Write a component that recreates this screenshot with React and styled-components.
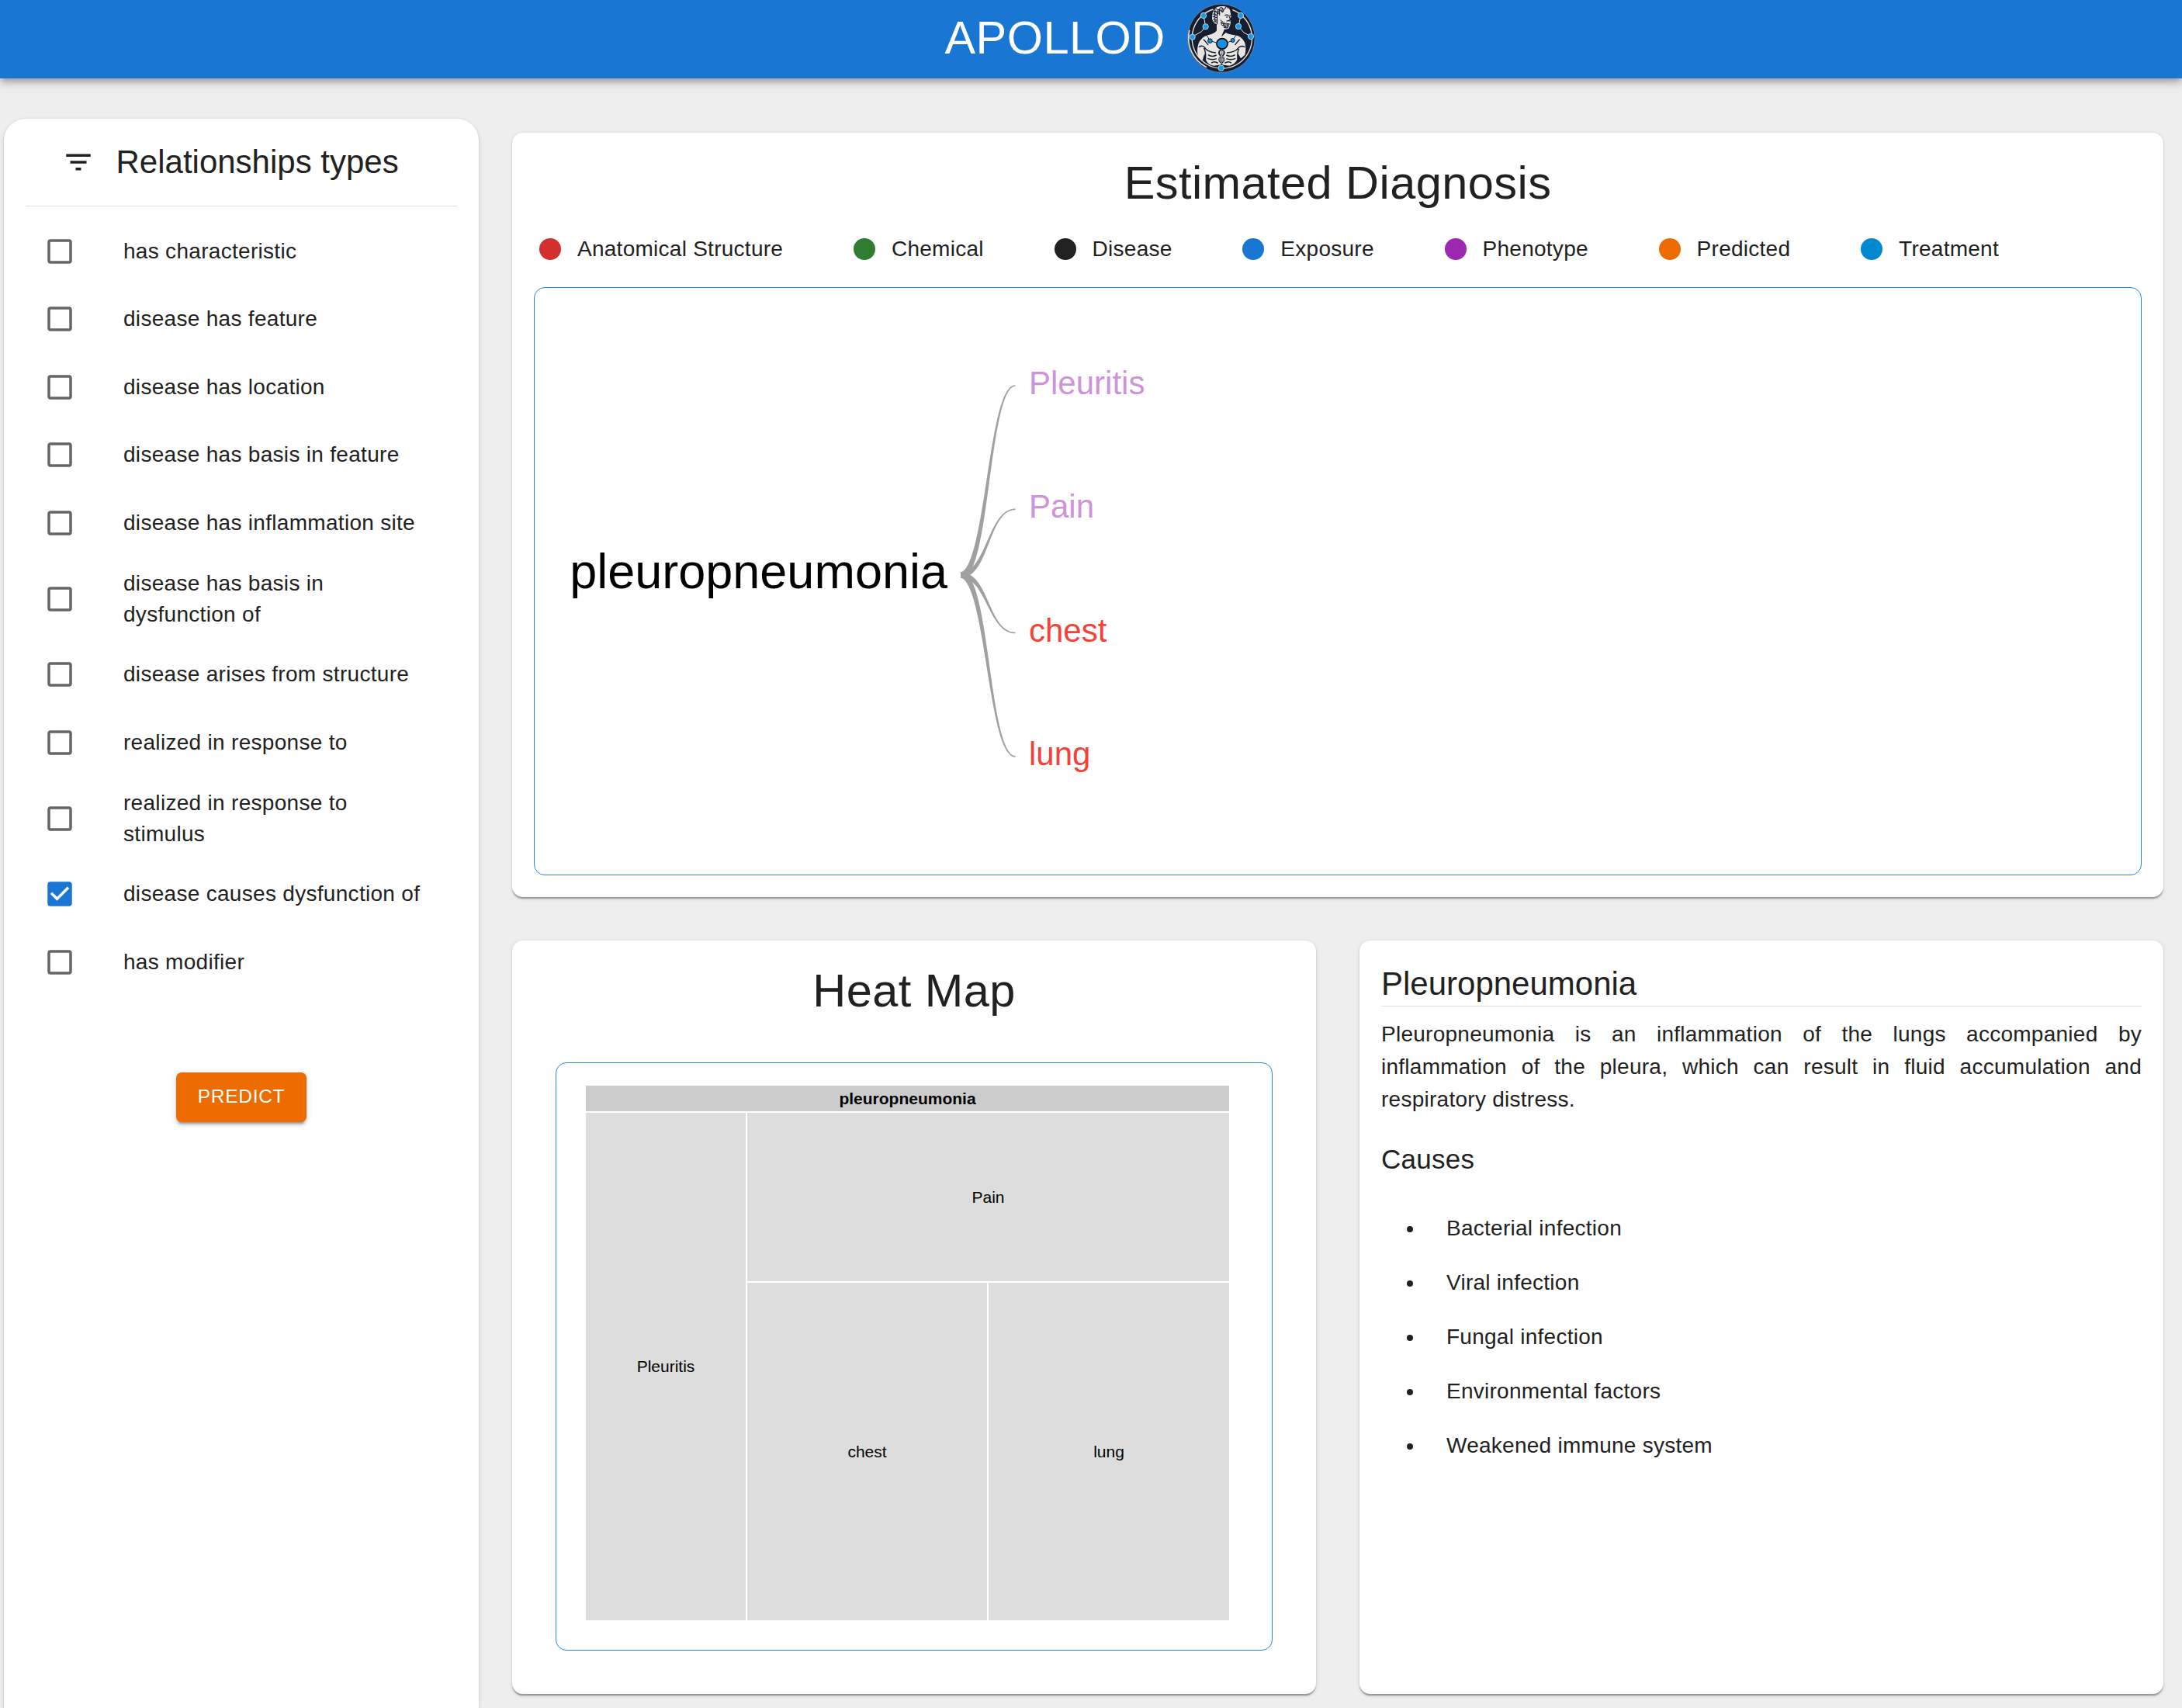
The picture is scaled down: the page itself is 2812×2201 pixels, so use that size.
import React from 'react';
import styled, { createGlobalStyle } from 'styled-components';

const GlobalStyle = createGlobalStyle`
  *, *::before, *::after { box-sizing: border-box; }
  html, body { margin: 0; padding: 0; background: #eeeeee; }
  body {
    font-family: "Liberation Sans", Arial, sans-serif;
    color: #212121;
    overflow: hidden;
  }
`;

const Page = styled.div`
  display: flex;
  flex-direction: column;
  height: 2201px;
  overflow: hidden;
  background: #eeeeee;
`;

const TopBar = styled.header`
  display: flex;
  flex: none;
  justify-content: center;
  align-items: flex-start;
  gap: 28px;
  height: 101px;
  padding: 5px 0 0 23px;
  color: #fff;
  background: #1976d2;
  box-shadow: 0 3.5px 7px -1.75px rgba(0, 0, 0, 0.2), 0 7px 8.75px 0 rgba(0, 0, 0, 0.14),
    0 1.75px 17.5px 0 rgba(0, 0, 0, 0.12);
  z-index: 1;
`;

const Brand = styled.h1`
  margin: 7px 0 0;
  font-size: 59.5px;
  font-weight: 400;
  line-height: 73.5px;
  letter-spacing: 0.00735em;
`;

const LogoSvg = styled.svg`
  display: block;
  width: 88px;
  height: 89px;
`;

const Content = styled.div`
  display: flex;
  flex: 1;
  min-height: 0;
  gap: 43px;
  padding: 0 24px 0 5px;
`;

const Sidebar = styled.aside`
  flex: none;
  width: 612px;
  margin-top: 52px;
  background: #fff;
  border-radius: 28px 28px 0 0;
  box-shadow: 0 3.5px 1.75px -1.75px rgba(0, 0, 0, 0.2), 0 1.75px 1.75px 0 rgba(0, 0, 0, 0.14),
    0 1.75px 5.25px 0 rgba(0, 0, 0, 0.12);
`;

const SidebarHead = styled.div`
  display: flex;
  align-items: center;
  gap: 27.5px;
  height: 112px;
  margin: 0 28px;
  padding-left: 47px;
`;

const SidebarTitle = styled.h2`
  margin: 0;
  font-size: 42px;
  font-weight: 400;
  line-height: 56px;
`;

const Divider = styled.hr`
  height: 1px;
  margin: ${(p) => p.$inset || 0};
  border: 0;
  background: #e0e0e0;
`;

const Icon = styled.svg`
  flex: none;
  display: block;
  width: 42px;
  height: 42px;
  fill: ${(p) => p.$color || 'currentColor'};
`;

const FilterList = styled.ul`
  margin: 14px 0 0;
  padding: 0 0 0 51px;
  list-style: none;
`;

const FilterRow = styled.li`
  display: flex;
  align-items: center;
  gap: 61px;
  min-height: 87.5px;
  padding: 14px 0;
`;

const FilterLabel = styled.span`
  width: 395px;
  font-size: 28px;
  line-height: 40px;
  letter-spacing: 0.01071em;
`;

const PredictButton = styled.button`
  display: block;
  width: 168px;
  height: 64px;
  margin: 98px auto 0;
  padding: 0 0 3px;
  border: 0;
  border-radius: 7px;
  color: #fff;
  background: #ed6c02;
  font-family: inherit;
  font-size: 24.5px;
  line-height: 43px;
  letter-spacing: 0.02857em;
  box-shadow: 0 5.25px 1.75px -3.5px rgba(0, 0, 0, 0.2), 0 3.5px 3.5px 0 rgba(0, 0, 0, 0.14),
    0 1.75px 8.75px 0 rgba(0, 0, 0, 0.12);
`;

const Main = styled.main`
  display: flex;
  flex: 1;
  flex-direction: column;
  gap: 56px;
  min-width: 0;
  padding-top: 70px;
`;

const Card = styled.section`
  display: flex;
  flex: ${(p) => p.$flex || 'none'};
  flex-direction: column;
  min-width: 0;
  height: ${(p) => p.$height}px;
  padding: 28px;
  background: #fff;
  border-radius: 14px;
  box-shadow: 0 3.5px 1.75px -1.75px rgba(0, 0, 0, 0.2), 0 1.75px 1.75px 0 rgba(0, 0, 0, 0.14),
    0 1.75px 5.25px 0 rgba(0, 0, 0, 0.12);
`;

const CardRow = styled.div`
  display: flex;
  gap: 56px;
`;

const CardTitle = styled.h2`
  margin: 0;
  font-size: 59.5px;
  font-weight: 400;
  line-height: 73px;
  letter-spacing: 0.00735em;
  text-align: center;
`;

const Legend = styled.ul`
  display: flex;
  gap: 83.8px;
  margin: 28px 0;
  padding: 0;
  list-style: none;
`;

const LegendItem = styled.li`
  display: flex;
  align-items: center;
  gap: 14px;
  font-size: 28px;
  line-height: 42px;
  letter-spacing: 0.00938em;
  white-space: nowrap;
`;

const Dot = styled.span`
  flex: none;
  width: 28px;
  height: 28px;
  margin: 7px;
  border-radius: 50%;
  background: ${(p) => p.$color};
`;

const Frame = styled.div`
  height: 758px;
  margin: ${(p) => p.$margin || 0};
  padding: ${(p) => p.$padding || 0};
  border: 1px solid #2088ee;
  border-radius: 14px;
`;

const TreeSvg = styled.svg`
  display: block;
  width: 2070px;
  height: 756px;
  font-size: 42px;
`;

const HeatTable = styled.div`
  display: flex;
  flex-direction: column;
  gap: 2px;
  width: 829px;
  height: 689px;
  color: #000;
  font-size: 21px;
  line-height: 24px;
`;

const HeatHead = styled.div`
  flex: none;
  height: 33px;
  background: #cccccc;
  font-weight: 700;
  line-height: 33px;
  text-align: center;
`;

const HeatGrid = styled.div`
  display: grid;
  flex: 1;
  grid-template-columns: 206px 309px 310px;
  grid-template-rows: 217px 1fr;
  gap: 2px;
`;

const HeatCell = styled.div`
  display: flex;
  align-items: center;
  justify-content: center;
  grid-column: span ${(p) => p.$cols || 1};
  grid-row: span ${(p) => p.$rows || 1};
  background: #dddddd;
`;

const InfoTitle = styled.h3`
  margin: 0;
  font-size: 42px;
  font-weight: 400;
  line-height: 56px;
`;

const Summary = styled.p`
  margin: 15px 0 28px;
  font-size: 28px;
  line-height: 42px;
  letter-spacing: 0.00938em;
  text-align: justify;
`;

const InfoSubtitle = styled.h4`
  margin: 0;
  font-size: 35px;
  font-weight: 400;
  line-height: 56px;
  letter-spacing: 0.0075em;
`;

const CauseList = styled.ul`
  margin: 26px 0 0;
  padding: 0 0 0 33px;
  list-style: none;
`;

const CauseItem = styled.li`
  display: flex;
  align-items: center;
  gap: 43px;
  padding: 14px 0;
  font-size: 28px;
  line-height: 42px;
  letter-spacing: 0.00938em;

  &::before {
    content: '';
    width: 8px;
    height: 8px;
    margin-top: 1px;
    border-radius: 50%;
    background: #212121;
  }
`;

const FILTERS = [
  { label: 'has characteristic' },
  { label: 'disease has feature' },
  { label: 'disease has location' },
  { label: 'disease has basis in feature' },
  { label: 'disease has inflammation site' },
  { label: 'disease has basis in dysfunction of' },
  { label: 'disease arises from structure' },
  { label: 'realized in response to' },
  { label: 'realized in response to stimulus' },
  { label: 'disease causes dysfunction of', checked: true },
  { label: 'has modifier' },
];

const LEGEND = [
  ['Anatomical Structure', '#d32f2f'],
  ['Chemical', '#2e7d32'],
  ['Disease', '#212121'],
  ['Exposure', '#1976d2'],
  ['Phenotype', '#9c27b0'],
  ['Predicted', '#ed6c02'],
  ['Treatment', '#0288d1'],
];

const PHENOTYPE = '#ce93d8';
const ANATOMY = '#f44336';

const CHILDREN = [
  { name: 'Pleuritis', color: PHENOTYPE, y: 126, base: 137, taper: 1.5 },
  { name: 'Pain', color: PHENOTYPE, y: 285.3, base: 296, taper: 2.1 },
  { name: 'chest', color: ANATOMY, y: 444.5, base: 456, taper: 2.1 },
  { name: 'lung', color: ANATOMY, y: 603.9, base: 615, taper: 1.5 },
];

const CAUSES = [
  'Bacterial infection',
  'Viral infection',
  'Fungal infection',
  'Environmental factors',
  'Weakened immune system',
];

// Outline of an S-curve whose width shrinks from the root to the leaf.
function taperedLink(x0, y0, x1, y1, taper) {
  const steps = 48;
  const upper = [];
  const lower = [];
  for (let i = 0; i <= steps; i += 1) {
    const t = i / steps;
    const u = 1 - t;
    const mid = (x0 + x1) / 2;
    const x = u * u * u * x0 + 3 * u * t * mid + t * t * t * x1;
    const y = y0 * (u * u * u + 3 * u * u * t) + y1 * (3 * u * t * t + t * t * t);
    const dx = 3 * u * u * (mid - x0) + 3 * t * t * (x1 - mid);
    const dy = 6 * u * t * (y1 - y0);
    const len = Math.hypot(dx, dy) || 1;
    const half = (1.6 + 6.2 * u ** taper) / 2;
    upper.push(`${(x - (dy / len) * half).toFixed(2)},${(y + (dx / len) * half).toFixed(2)}`);
    lower.unshift(`${(x + (dy / len) * half).toFixed(2)},${(y - (dx / len) * half).toFixed(2)}`);
  }
  return `M${upper.concat(lower).join('L')}Z`;
}

function Logo() {
  const ink = '#141e2e';
  const skin = '#e9e5e2';
  const node = '#1590e0';
  return (
    <LogoSvg viewBox="43 17 264 267">
      <ellipse cx="174.5" cy="150" rx="130" ry="132" fill={ink} />
      <ellipse cx="174.5" cy="150" rx="130" ry="132" fill="none" stroke="#8d97a3" strokeWidth="2" />
      <path d="M52 118A125 126 0 0 0 118 262" fill="none" stroke="#dcdcdc" strokeWidth="5" />
      <path d="M143 38A116 117 0 1 0 218 40" fill="none" stroke={skin} strokeWidth="4" />
      <path
        d="M106 62L114 104L98 124L62 145M250 62L241 104L262 128L290 144"
        fill="none"
        stroke={skin}
        strokeWidth="3"
      />
      {/* shoulders and torso */}
      <path
        d="M157 92L157 120Q150 132 122 138Q96 146 86 172Q78 198 86 222L102 236L110 208L116 236Q126 254 146 256L174 252L206 256Q228 250 236 232L240 208L250 228L266 214Q272 190 266 168Q256 142 226 138Q196 134 190 126L175 144L190 112Z"
        fill={skin}
      />
      <path d="M176 143L168 116L182 120Z" fill={skin} />
      <path d="M188 112L175 144L190 130L198 120Z" fill={ink} />
      {/* head, hair and beard */}
      <path
        d="M148 36Q160 25 182 26Q206 26 209 44L213 68L209 72L211 92L204 112L190 116L172 104L160 96L148 92L139 76Q139 50 148 36Z"
        fill={skin}
      />
      <path
        d="M147 38q6 -6 11 0t11 -3t11 0t11 -3t10 3M144 48q6 -6 11 0t10 -3t10 0t9 -4M143 58q5 -5 9 0t9 -2t8 0M142 68q5 -5 9 0t9 -2M143 78q5 -5 9 0t9 -2M148 88q5 -5 9 0M150 38v50M159 42v54M168 38v24M178 34v12"
        fill="none"
        stroke={ink}
        strokeWidth="3.4"
      />
      <path
        d="M172 78q5 6 3 12t6 12M179 84q4 6 3 10t6 14M187 88q3 6 2 10t5 13M195 90q3 5 2 8t3 10M203 92q-2 8 0 12M172 90q12 6 36 5M177 99q12 6 28 4M184 108q8 3 18 1"
        fill="none"
        stroke={ink}
        strokeWidth="3"
      />
      <path
        d="M188 62Q196 57 202 62L212 63M193 68h9M206 66l4 12l-6 3M195 84q8 -4 14 0"
        fill="none"
        stroke={ink}
        strokeWidth="3.6"
      />
      {/* muscles */}
      <path
        d="M88 184Q100 176 109 184Q120 204 154 206M266 184Q252 176 242 186Q228 204 196 206M108 188Q118 210 112 240M242 190Q234 214 240 236M124 214Q138 224 156 215M228 214Q212 224 194 215M122 228Q140 236 156 229M230 228Q212 236 194 229M136 246Q148 236 162 246M214 246Q202 236 188 246M106 154Q118 166 124 176M246 154Q234 166 228 176"
        fill="none"
        stroke={ink}
        strokeWidth="4.2"
      />
      {/* chest emblem with the staff below */}
      <path d="M116 134L131 160L156 167M232 138L218 158L200 166" fill="none" stroke={ink} strokeWidth="3" />
      <circle cx="131" cy="160" r="8.5" fill={node} stroke={ink} strokeWidth="3" />
      <circle cx="219" cy="158" r="7.5" fill={node} stroke={ink} strokeWidth="3" />
      <ellipse cx="178" cy="171" rx="21.5" ry="20" fill={node} stroke="#070c14" strokeWidth="5" />
      <path d="M176 192V256" stroke={ink} strokeWidth="6" />
      <ellipse cx="176" cy="206" rx="10" ry="11" fill="none" stroke={ink} strokeWidth="6" />
      <ellipse cx="176" cy="232" rx="9" ry="11" fill="none" stroke={ink} strokeWidth="6" />
      <path
        d="M168 198q20 10 8 20q-14 10 -4 24M184 198q-20 10 -8 20q14 10 4 24M176 194V248"
        fill="none"
        stroke={skin}
        strokeWidth="2"
      />
      {[
        [106, 62],
        [114, 105],
        [63, 145],
        [250, 62],
        [241, 104],
        [289, 143],
        [174, 265],
      ].map(([cx, cy]) => (
        <circle key={`${cx}-${cy}`} cx={cx} cy={cy} r="11" fill="#189be8" stroke="#d5e6ee" strokeWidth="2.4" />
      ))}
    </LogoSvg>
  );
}

function Checkbox({ checked }) {
  if (checked) {
    return (
      <Icon viewBox="0 0 24 24" $color="#1976d2">
        <path d="M19 3H5c-1.11 0-2 .9-2 2v14c0 1.1.89 2 2 2h14c1.11 0 2-.9 2-2V5c0-1.1-.89-2-2-2zm-9 14l-5-5 1.41-1.41L10 14.17l7.59-7.59L19 8l-9 9z" />
      </Icon>
    );
  }
  return (
    <Icon viewBox="0 0 24 24" $color="#666666">
      <path d="M19 5v14H5V5h14m0-2H5c-1.1 0-2 .9-2 2v14c0 1.1.9 2 2 2h14c1.1 0 2-.9 2-2V5c0-1.1-.9-2-2-2z" />
    </Icon>
  );
}

function DiagnosisTree() {
  return (
    <TreeSvg viewBox="0 0 2070 756">
      <g fill="#a0a0a0">
        {CHILDREN.map((c) => (
          <path key={c.name} d={taperedLink(549, 370, 619.5, c.y, c.taper)} />
        ))}
      </g>
      <text x="532" y="387" fontSize="63" textAnchor="end" fill="#000">
        pleuropneumonia
      </text>
      {CHILDREN.map((c) => (
        <text key={c.name} x="637" y={c.base} fill={c.color}>
          {c.name}
        </text>
      ))}
    </TreeSvg>
  );
}

export default function App() {
  return (
    <Page>
      <GlobalStyle />
      <TopBar>
        <Brand>APOLLOD</Brand>
        <Logo />
      </TopBar>
      <Content>
        <Sidebar>
          <SidebarHead>
            <Icon viewBox="0 0 24 24">
              <path d="M10 18h4v-2h-4v2zM3 6v2h18V6H3zm3 7h12v-2H6v2z" />
            </Icon>
            <SidebarTitle>Relationships types</SidebarTitle>
          </SidebarHead>
          <Divider $inset="0 28px" />
          <FilterList>
            {FILTERS.map((f) => (
              <FilterRow key={f.label}>
                <Checkbox checked={f.checked} />
                <FilterLabel>{f.label}</FilterLabel>
              </FilterRow>
            ))}
          </FilterList>
          <PredictButton>PREDICT</PredictButton>
        </Sidebar>
        <Main>
          <Card $height={985}>
            <CardTitle>Estimated Diagnosis</CardTitle>
            <Legend>
              {LEGEND.map(([label, color]) => (
                <LegendItem key={label}>
                  <Dot $color={color} />
                  {label}
                </LegendItem>
              ))}
            </Legend>
            <Frame>
              <DiagnosisTree />
            </Frame>
          </Card>
          <CardRow>
            <Card $height={971} $flex="1">
              <CardTitle>Heat Map</CardTitle>
              <Frame $margin="56px 28px 0" $padding="29px 0 0 38px">
                <HeatTable>
                  <HeatHead>pleuropneumonia</HeatHead>
                  <HeatGrid>
                    <HeatCell $rows={2}>Pleuritis</HeatCell>
                    <HeatCell $cols={2}>Pain</HeatCell>
                    <HeatCell>chest</HeatCell>
                    <HeatCell>lung</HeatCell>
                  </HeatGrid>
                </HeatTable>
              </Frame>
            </Card>
            <Card $height={971} $flex="1">
              <InfoTitle>Pleuropneumonia</InfoTitle>
              <Divider />
              <Summary>
                Pleuropneumonia is an inflammation of the lungs accompanied by inflammation of the
                pleura, which can result in fluid accumulation and respiratory distress.
              </Summary>
              <InfoSubtitle>Causes</InfoSubtitle>
              <CauseList>
                {CAUSES.map((c) => (
                  <CauseItem key={c}>{c}</CauseItem>
                ))}
              </CauseList>
            </Card>
          </CardRow>
        </Main>
      </Content>
    </Page>
  );
}
